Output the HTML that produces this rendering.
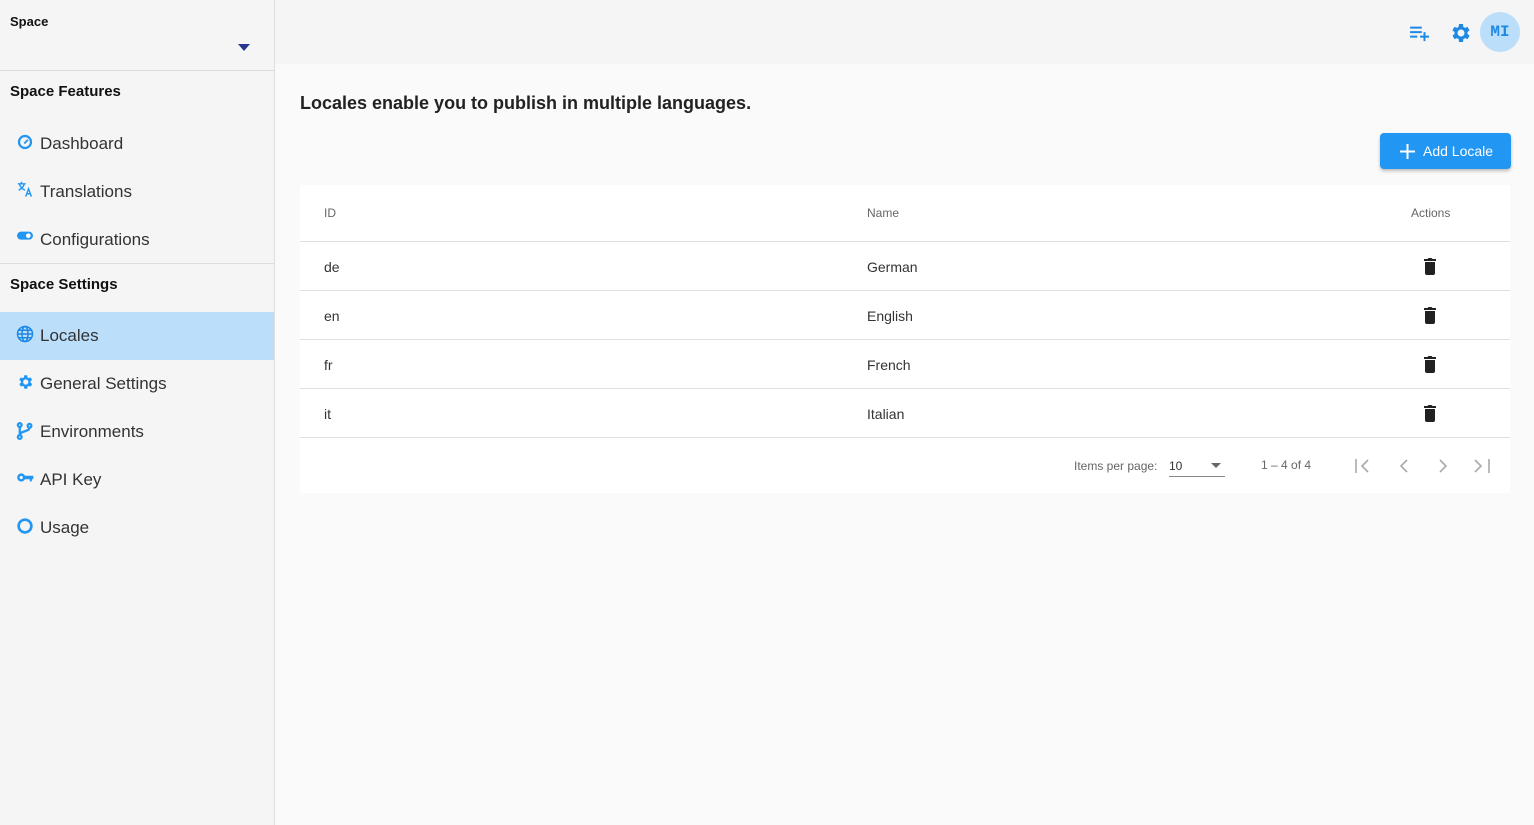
<!DOCTYPE html>
<html><head><meta charset="utf-8"><style>
*{box-sizing:border-box;margin:0;padding:0}
body{width:1534px;height:825px;overflow:hidden;font-family:"Liberation Sans",sans-serif;background:#fafafa;position:relative;color:#212121}
.side{position:absolute;left:0;top:0;width:275px;height:825px;background:#f5f5f5;border-right:1px solid #ddd}
.abs{position:absolute}
.hr{position:absolute;left:0;width:274px;height:1px;background:#ddd}
.h{position:absolute;left:10px;font-weight:bold;font-size:15px;color:#111}
.item{position:absolute;left:0;width:274px;height:48px;font-size:17px;color:#333}
.item svg{position:absolute;left:16px;top:13px}
.item span{position:absolute;left:40px;top:14px}
.top{position:absolute;left:275px;top:0;right:0;height:64px;background:#f5f5f5}
.card{position:absolute;left:300px;top:185px;width:1210px;height:308px;background:#fff}
.row{position:absolute;left:0;width:1210px;height:49px;border-bottom:1px solid #e0e0e0;font-size:14px;color:#333}
.row span{position:absolute;top:17px}
.th{font-size:12px;color:#666}
</style></head><body>
<div class="side">
 <div class="h" style="top:14px;font-size:13px">Space</div>
 <svg class="abs" style="left:238px;top:44px" width="12" height="7"><path d="M0 0h12L6 7z" fill="#283593"/></svg>
 <div class="hr" style="top:70px"></div>
 <div class="h" style="top:83px">Space Features</div>
 <div class="item" style="top:120px"><svg width="18" height="18" viewBox="0 0 24 24"><circle cx="12" cy="12" r="8" fill="none" stroke="#2196f3" stroke-width="3"/><path d="M11 14l5-5" stroke="#2196f3" stroke-width="2.5"/></svg><span>Dashboard</span></div>
 <div class="item" style="top:168px"><svg width="18" height="17" viewBox="0 0 24 24"><path d="M2 4h11M7 1v3M4 4c1 4 4 7 8 9M11 4c-1 4-4 7-8 9M13 22l4-11 4 11M14.5 18h5" fill="none" stroke="#2196f3" stroke-width="2"/></svg><span>Translations</span></div>
 <div class="item" style="top:216px"><svg width="18" height="16" viewBox="0 0 24 24"><rect x="0" y="4" width="24" height="12" rx="6" fill="#2196f3"/><circle cx="17" cy="10" r="3.5" fill="#fff"/></svg><span>Configurations</span></div>
 <div class="hr" style="top:263px"></div>
 <div class="h" style="top:276px">Space Settings</div>
 <div class="item" style="top:312px;background:#bbdefb"><svg width="18" height="18" viewBox="0 0 24 24" fill="none" stroke="#1e88e5" stroke-width="2"><circle cx="12" cy="12" r="10"/><ellipse cx="12" cy="12" rx="4" ry="10"/><path d="M2 12h20M4 7h16M4 17h16"/></svg><span>Locales</span></div>
 <div class="item" style="top:360px"><svg width="18" height="18" viewBox="0 0 24 24"><path fill="#2196f3" d="M19.4 13a7.5 7.5 0 000-2l2.1-1.6-2-3.5-2.5 1a7 7 0 00-1.7-1L15 3h-4l-.4 2.9a7 7 0 00-1.7 1l-2.5-1-2 3.5L6.6 11a7.5 7.5 0 000 2l-2.1 1.6 2 3.5 2.5-1a7 7 0 001.7 1L11 21h4l.4-2.9a7 7 0 001.7-1l2.5 1 2-3.5zM13 15.5a3.5 3.5 0 110-7 3.5 3.5 0 010 7z"/></svg><span>General Settings</span></div>
 <div class="item" style="top:408px"><svg width="18" height="20" viewBox="0 0 24 24" fill="none" stroke="#2196f3" stroke-width="3"><circle cx="5" cy="4" r="2.5"/><circle cx="5" cy="20" r="2.5"/><circle cx="18" cy="5" r="2.5"/><path d="M5 6.5v11M18 7.5c0 6-13 4-13 10"/></svg><span>Environments</span></div>
 <div class="item" style="top:456px"><svg width="19" height="17" viewBox="0 0 24 24"><circle cx="6" cy="12" r="4" fill="none" stroke="#2196f3" stroke-width="3.5"/><path d="M10 9.5h13v5h-2v3h-3v-3h-8z" fill="#2196f3"/></svg><span>API Key</span></div>
 <div class="item" style="top:504px"><svg width="18" height="18" viewBox="0 0 24 24"><circle cx="12" cy="12" r="8.5" fill="none" stroke="#2196f3" stroke-width="3.5"/></svg><span>Usage</span></div>
</div>
<div class="top">
 <svg class="abs" style="left:1134px;top:24px" width="22" height="18" viewBox="0 0 24 20"><path d="M1 4h13M1 9h13M1 14h8M17 9v10M12 14h10" stroke="#1e88e5" stroke-width="2.2"/></svg>
 <svg class="abs" style="left:1173px;top:21px" width="24" height="24" viewBox="0 0 24 24"><path fill="#1e88e5" d="M19.4 13a7.5 7.5 0 000-2l2.1-1.6-2-3.5-2.5 1a7 7 0 00-1.7-1L15 3h-4l-.4 2.9a7 7 0 00-1.7 1l-2.5-1-2 3.5L6.6 11a7.5 7.5 0 000 2l-2.1 1.6 2 3.5 2.5-1a7 7 0 001.7 1L11 21h4l.4-2.9a7 7 0 001.7-1l2.5 1 2-3.5zM13 15.5a3.5 3.5 0 110-7 3.5 3.5 0 010 7z"/></svg>
 <div class="abs" style="left:1205px;top:12px;width:40px;height:40px;border-radius:50%;background:#bbdefb;color:#1e88e5;font-family:'Liberation Mono',monospace;font-weight:bold;font-size:16px;line-height:40px;text-align:center">MI</div>
</div>
<div class="abs" style="left:300px;top:93px;font-size:18px;font-weight:bold;color:#222">Locales enable you to publish in multiple languages.</div>
<div class="abs" style="left:1380px;top:133px;width:131px;height:36px;background:#2196f3;border-radius:4px;box-shadow:0 2px 3px rgba(0,0,0,.25);color:#fff;font-size:14px;line-height:36px">
 <svg class="abs" style="left:20px;top:11px" width="15" height="15"><path d="M7.5 0v15M0 7.5h15" stroke="#fff" stroke-width="2"/></svg>
 <span class="abs" style="left:43px;top:0">Add Locale</span></div>
<div class="card">
 <div class="row th" style="top:0;height:57px"><span style="left:24px;top:21px">ID</span><span style="left:567px;top:21px">Name</span><span style="left:1111px;top:21px">Actions</span></div>
 <div class="row" style="top:57px"><span style="left:24px">de</span><span style="left:567px">German</span></div>
 <div class="row" style="top:106px"><span style="left:24px">en</span><span style="left:567px">English</span></div>
 <div class="row" style="top:155px"><span style="left:24px">fr</span><span style="left:567px">French</span></div>
 <div class="row" style="top:204px"><span style="left:24px">it</span><span style="left:567px">Italian</span></div>
 <svg class="abs" style="left:1123px;top:72px" width="14" height="18" viewBox="0 0 14 18"><path d="M1 4h12v-2h-3.5l-1-1h-3l-1 1H1zM2 5h10v11a2 2 0 01-2 2H4a2 2 0 01-2-2z" fill="#212121"/></svg>
 <svg class="abs" style="left:1123px;top:121px" width="14" height="18" viewBox="0 0 14 18"><path d="M1 4h12v-2h-3.5l-1-1h-3l-1 1H1zM2 5h10v11a2 2 0 01-2 2H4a2 2 0 01-2-2z" fill="#212121"/></svg>
 <svg class="abs" style="left:1123px;top:170px" width="14" height="18" viewBox="0 0 14 18"><path d="M1 4h12v-2h-3.5l-1-1h-3l-1 1H1zM2 5h10v11a2 2 0 01-2 2H4a2 2 0 01-2-2z" fill="#212121"/></svg>
 <svg class="abs" style="left:1123px;top:219px" width="14" height="18" viewBox="0 0 14 18"><path d="M1 4h12v-2h-3.5l-1-1h-3l-1 1H1zM2 5h10v11a2 2 0 01-2 2H4a2 2 0 01-2-2z" fill="#212121"/></svg>
 <div class="abs" style="left:774px;top:274px;font-size:12px;color:#666">Items per page:</div>
 <div class="abs" style="left:869px;top:274px;font-size:12px;color:#333">10</div>
 <svg class="abs" style="left:911px;top:278px" width="10" height="5"><path d="M0 0h10L5 5z" fill="#666"/></svg>
 <div class="abs" style="left:869px;top:291px;width:56px;height:1px;background:#888"></div>
 <div class="abs" style="left:961px;top:273px;font-size:12px;color:#666">1 – 4 of 4</div>
 <svg class="abs" style="left:1053px;top:273px" width="140" height="16" viewBox="0 0 140 16" fill="none" stroke="#aaa" stroke-width="1.6"><path d="M3 1v14M15 2l-6 6 6 6M54 2l-6 6 6 6M87 2l6 6-6 6M122 2l6 6-6 6M136 1v14"/></svg>
</div>
</body></html>
